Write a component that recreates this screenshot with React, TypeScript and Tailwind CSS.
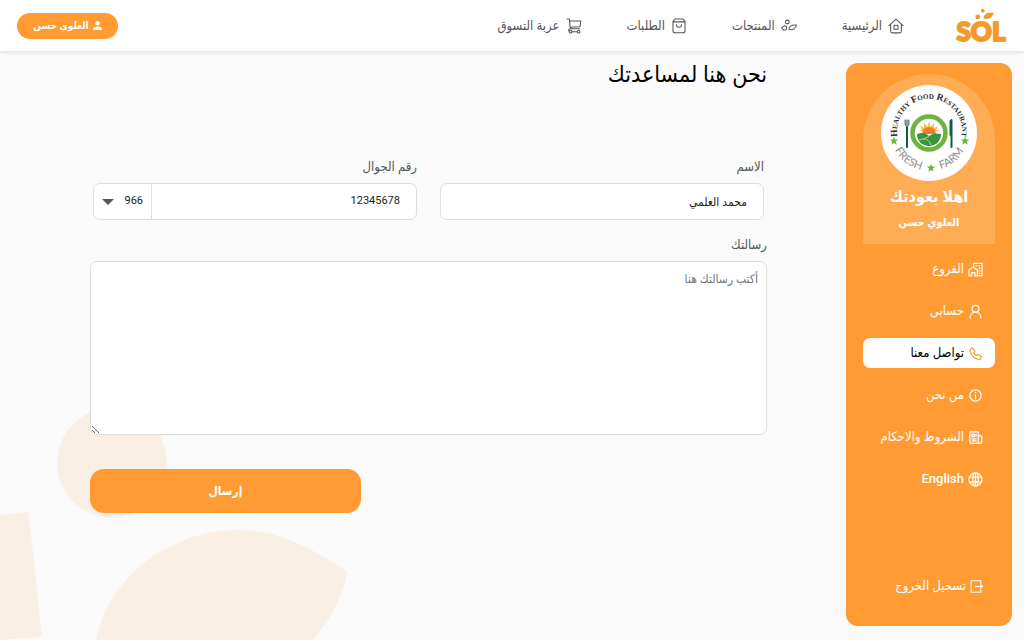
import type { ReactNode } from "react";

function Icon({
  children,
  className,
}: {
  children: ReactNode;
  className: string;
}) {
  return (
    <svg
      viewBox="0 0 24 24"
      className={`shrink-0 ${className}`}
      fill="none"
      stroke="currentColor"
      strokeLinecap="round"
      strokeLinejoin="round"
      aria-hidden="true"
    >
      {children}
    </svg>
  );
}

const navItems = [
  {
    label: "الرئيسية",
    icon: (
      <>
        <path d="M1.5 11.5 12 1.800l10.500 9.700M4 9.500V20a2.300 2.300 0 0 0 2.300 2.300h11.400A2.300 2.300 0 0 0 20 20V9.500" />
        <rect x="9" y="11" width="6" height="6" rx="1" />
      </>
    ),
  },
  {
    label: "المنتجات",
    icon: (
      <>
        <circle cx="9.500" cy="6" r="2.800" />
        <path d="M5.500 11.500l3 2-.7 4.200-4 .5L1 14.500z" />
        <path d="M12 17c-.3-4.300 4-7.300 11-6.500-.3 5-5.500 8.500-11 6.500z" />
      </>
    ),
  },
  {
    label: "الطلبات",
    icon: (
      <>
        <path d="M6 1.500h12L21 5v14a3 3 0 0 1-3 3H6a3 3 0 0 1-3-3V5zM3 5.800h18" />
        <path d="M8 10c0 5 8 5 8 0" />
      </>
    ),
  },
  {
    label: "عربة التسوق",
    icon: (
      <>
        <path d="M1.500 1.500H5l1.500 14.500h14M5.300 4.500h17l-1.300 8.500-14.700 1M6.500 16c-3 0-3.500 3.500-1 3.800" />
        <circle cx="7" cy="20.500" r="2" />
        <circle cx="19" cy="20.500" r="2" />
        <path d="M9 20.500h8" />
      </>
    ),
  },
];

const menuItems = [
  {
    label: "الفروع",
    icon: (
      <>
        <path d="M9 8V2h13.500v20H15M1.500 13 8 8l7 5v9h-4v-5H6v5H1.500z" />
        <path d="M13 6h1.500M17.500 6H19M17.500 10H19M17.500 14H19M17.500 18H19" />
      </>
    ),
  },
  {
    label: "حسابي",
    icon: (
      <>
        <circle cx="12" cy="7.500" r="5.500" />
        <path d="M3.500 22.500c0-5.500 3.500-9.500 8.500-9.500s8.500 4 8.500 9.500" />
      </>
    ),
  },
  {
    label: "تواصل معنا",
    active: true,
    icon: (
      <path d="M4 4.500 7 3l4 5.500-2.200 2.300c1 2.300 2.400 3.600 4.600 4.600L16 13.200l5.500 4-1.500 3.300c-1.200 1.400-4 1.200-7-.4C8 17.500 4.500 13 3.500 8.500c-.3-1.600-.3-3 .5-4z" />
    ),
  },
  {
    label: "من نحن",
    icon: (
      <>
        <circle cx="12" cy="12" r="9" />
        <path d="M12 11v6M12 7v.5" />
      </>
    ),
  },
  {
    label: "الشروط والاحكام",
    icon: (
      <>
        <path d="M3 3h13.500v18.500H5.500A2.500 2.500 0 0 1 3 19zM16.500 9.500H22V19a2.500 2.500 0 0 1-5 0" />
        <path d="M6.500 6.500h4v4h-4zM13 7v3M6.500 14H13M6.500 17.500H13" />
      </>
    ),
  },
  {
    label: "English",
    icon: (
      <>
        <circle cx="12" cy="12" r="10.500" />
        <ellipse cx="12" cy="12" rx="4.500" ry="10.500" />
        <path d="M12 1.500v21M2.500 8h19M2.500 16h19" />
      </>
    ),
  },
];

function SolLogo() {
  return (
    <svg
      viewBox="0 0 52 40"
      className="h-10 w-[52px] overflow-visible"
      fill="#f39a2b"
      role="img"
      aria-label="Sol"
    >
      <text
        x="26"
        y="35"
        direction="ltr"
        textAnchor="middle"
        fontFamily="Lato, sans-serif"
        fontWeight="900"
        fontSize="26"
        stroke="#f39a2b"
        strokeWidth="2"
        strokeLinejoin="round"
      >
        SOL
      </text>
      <rect x="20.500" y="8.500" width="4.500" height="4.500" rx="1.500" transform="rotate(-8 23 11)" />
      <rect x="26" y="3" width="3.500" height="3.500" rx="1" transform="rotate(12 28 5)" />
      <path d="M28.500 12.500c0-4.500 4-6.500 10-5.500C38 11 34 14 28.500 12.500z" />
    </svg>
  );
}

function RestaurantLogo() {
  const star = "M0-4.500 1.100-1.400 4.300-1.400 1.800.6 2.700 3.700 0 1.900-2.700 3.700-1.800.6-4.300-1.400-1.100-1.400z";
  return (
    <svg
      viewBox="0 0 96 96"
      className="size-24"
      direction="ltr"
      role="img"
      aria-label="Healthy Food Restaurant Fresh Farm"
    >
      <circle cx="48" cy="48" r="48" fill="#fff" />
      <path id="top-arc" d="M16.500 52A32.500 32.500 0 1 1 80.500 52" fill="none" />
      <path id="bottom-arc" d="M10 55A39.500 39.500 0 0 0 87 55" fill="none" />
      <g textAnchor="middle">
        <text
          className="[font-variant:small-caps]"
          fontFamily="'Liberation Serif', serif"
          fontSize="9.500"
          fontWeight="700"
          fill="#2b2b2b"
        >
          <textPath href="#top-arc" startOffset="50%">
            Healthy Food Restaurant
          </textPath>
        </text>
        <g fontFamily="Lato, sans-serif" fontSize="11" fill="#8f8f8f">
          <text>
            <textPath href="#bottom-arc" startOffset="26%">FRESH</textPath>
          </text>
          <text>
            <textPath href="#bottom-arc" startOffset="75%">FARM</textPath>
          </text>
        </g>
      </g>
      <g fill="#6cb33f">
        <path d={star} transform="translate(13 56)" />
        <path d={star} transform="translate(84 56)" />
        <path d={star} transform="translate(50 83)" />
      </g>
      <circle cx="48" cy="48" r="16.500" fill="#fff" stroke="#6cb33f" strokeWidth="4.500" />
      <path
        d="M37 46l4-1-2-4 4 2 0-5 3.500 4L48 36l1.500 6 3.500-4 0 5 4-2-2 4 4 1z"
        fill="#f9bd4b"
      />
      <path d="M41 49a7 7 0 0 1 14 0z" fill="#f07e2b" />
      <path d="M36 49c6-2 9-1 12 2 4-3 8-3 12-2 0 7-5 12-12 12s-12-5-12-12z" fill="#38953e" />
      <path d="M38 55c6-3 10 0 12 5M48 51c-3 2-5 3-6 4" fill="none" stroke="#b9dc6b" strokeWidth="1" />
      <g fill="none" stroke="#155b49" strokeLinecap="round">
        <path d="M26 42v20" strokeWidth="2" />
        <path d="M24.200 35v5q1.800 3 3.600 0v-5M26 35v5" strokeWidth="1" />
        <path d="M70.500 35v27" strokeWidth="2" />
        <path d="M69.500 36v14" strokeWidth="2" />
      </g>
    </svg>
  );
}

function Header() {
  return (
    <header className="relative z-10 flex h-[51px] items-center bg-white px-[17px] shadow-[0_1px_4px_rgba(0,0,0,0.12)]">
      <a href="#home" className="shrink-0">
        <SolLogo />
      </a>
      <nav className="mr-[51px] flex items-center gap-[45px] text-[13px] text-[#555]">
        {navItems.map((item) => (
          <a
            key={item.label}
            href="#nav"
            className="flex items-center gap-[6px] whitespace-nowrap"
          >
            <Icon className="size-4 stroke-[1.6]">{item.icon}</Icon>
            {item.label}
          </a>
        ))}
      </nav>
      <button className="mr-auto flex h-[26px] w-[101px] items-center justify-center gap-1 rounded-full bg-[#ff9b32] text-[10px] font-bold whitespace-nowrap text-white">
        <svg viewBox="0 0 16 16" className="size-[9px]" fill="currentColor" aria-hidden="true">
          <circle cx="8" cy="4" r="4" />
          <path d="M0 16v-2.500C0 8.500 16 8.500 16 13.500V16z" />
        </svg>
        العلوي حسن
      </button>
    </header>
  );
}

function Sidebar() {
  return (
    <aside className="flex w-[166px] shrink-0 flex-col rounded-[12px] bg-[#ff9b32] px-[17px] pt-[11px] pb-[25px] text-white">
      <div className="flex h-[170px] flex-col items-center rounded-t-full bg-[#ffad55] pt-[11px]">
        <RestaurantLogo />
        <p className="mt-1 text-base leading-6 font-bold">اهلا بعودتك</p>
        <p className="mt-1 text-[11px] leading-5 font-bold">العلوي حسن</p>
      </div>
      <nav className="mt-[10px] flex flex-col gap-3 text-[13px]">
        {menuItems.map((item) => (
          <a
            key={item.label}
            href="#menu"
            className={`flex h-[30px] items-center gap-1 rounded-[7px] px-3 whitespace-nowrap ${
              item.active ? "bg-white text-black" : "font-medium"
            }`}
          >
            <Icon
              className={
                item.active ? "size-[15px] stroke-[1.8] text-[#ff9b32]" : "size-[15px] stroke-2"
              }
            >
              {item.icon}
            </Icon>
            {item.label}
          </a>
        ))}
      </nav>
      <button className="mt-auto flex h-[30px] items-center gap-1 px-3 text-[13px] font-medium whitespace-nowrap">
        <Icon className="size-[13px] stroke-2">
          <path d="M20 7V1.500H2v21h18V17M10 12h13M19.500 9l3.500 3-3.500 3" />
        </Icon>
        تسجيل الخروج
      </button>
    </aside>
  );
}

function ContactForm() {
  return (
    <form
      className="mt-[70px] text-[13px] text-[#555]"
      onSubmit={(e) => e.preventDefault()}
    >
      <div className="grid grid-cols-2 gap-[23px] px-[3px]">
        <div>
          <label htmlFor="name" className="block leading-5">
            الاسم
          </label>
          <input
            id="name"
            type="text"
            defaultValue="محمد العلمي"
            className="mt-[6px] block h-[37px] w-full rounded-[7px] border border-[#dedede] bg-white px-4 text-xs text-[#222]"
          />
        </div>
        <div>
          <label htmlFor="phone" className="block leading-5">
            رقم الجوال
          </label>
          <div className="mt-[6px] flex h-[37px] rounded-[7px] border border-[#dedede] bg-white text-[11px] text-[#222]">
            <input
              id="phone"
              type="text"
              defaultValue="12345678"
              className="min-w-0 flex-1 rounded-r-[7px] px-4"
            />
            <div className="relative w-[58px] border-r border-[#dedede]">
              <select
                aria-label="966"
                className="h-full w-full appearance-none rounded-l-[7px] pr-2 text-right"
              >
                <option>966</option>
              </select>
              <svg
                viewBox="0 0 12 6"
                className="pointer-events-none absolute top-[15px] left-2 h-[6px] w-3"
                fill="#555"
                aria-hidden="true"
              >
                <path d="M0 0h12L6 6z" />
              </svg>
            </div>
          </div>
        </div>
      </div>
      <label htmlFor="message" className="mt-[15px] block leading-5">
        رسالتك
      </label>
      <textarea
        id="message"
        placeholder="أكتب رسالتك هنا"
        className="mt-[6px] block h-[174px] w-full rounded-[7px] border border-[#dedede] bg-white px-2 py-[9px] text-xs placeholder:text-[#6c757d]"
      />
      <div className="mt-[34px] flex justify-end">
        <button className="h-11 w-2/5 rounded-[14px] bg-[#ff9b32] text-xs font-bold text-white">
          إرسال
        </button>
      </div>
    </form>
  );
}

export default function App() {
  return (
    <div
      dir="rtl"
      className="relative flex min-h-screen flex-col overflow-hidden bg-[#fafafa] font-[Roboto,'DejaVu_Sans_Condensed','DejaVu_Sans',sans-serif]"
    >
      <svg
        viewBox="0 0 350 230"
        className="absolute bottom-0 left-0 h-[230px] w-[350px]"
        fill="#faefe5"
        aria-hidden="true"
      >
        <circle cx="112" cy="53" r="55" />
        <path d="M0 105 28.500 102 42 227 0 230z" />
        <path d="M96 230C108 167 171 120 237 120c40 0 76 18 110 42-4 24-16 48-34 68z" />
      </svg>
      <Header />
      <div className="relative flex flex-1 px-3 pt-3 pb-[14px]">
        <Sidebar />
        <main className="mr-[79px] ml-[78px] min-w-0 flex-1">
          <h1 className="text-[23px] leading-6 text-black">نحن هنا لمساعدتك</h1>
          <ContactForm />
        </main>
      </div>
    </div>
  );
}
